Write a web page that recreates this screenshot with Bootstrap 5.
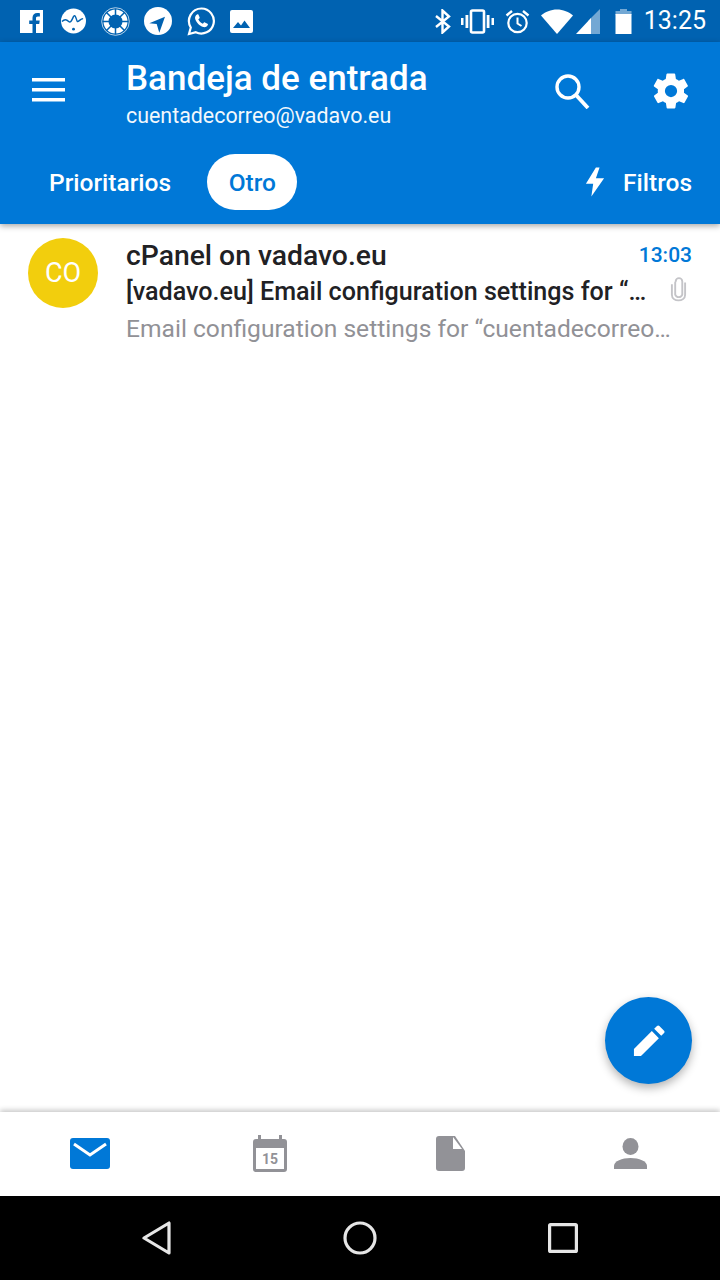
<!DOCTYPE html>
<html lang="es">
<head>
    <meta charset="UTF-8">
    <meta name="viewport" content="width=device-width, initial-scale=1.0">
    <title>Bandeja de entrada</title>
    <link href="https://cdn.jsdelivr.net/npm/bootstrap@5.3.0/dist/css/bootstrap.min.css" rel="stylesheet">
    <style>
        html, body { height: 100%; }
        body { font-family: Roboto, "Liberation Sans", sans-serif; background: #fff; overflow: hidden; }
        svg { display: block; flex-shrink: 0; }
        .screen { width: 720px; height: 1280px; position: relative; }
        .status-bar { height: 42px; background: #0062b1; color: #fff; padding: 0 14px 0 20px; }
        .status-left { gap: 15px; }
        .icon-fb { margin-right: 3px; }
        .icon-ring { margin-right: -1px; }
        .status-right { gap: 10px; }
        .icon-alarm { margin-left: 1px; margin-right: 1px; }
        .icon-signal { margin-left: -7px; }
        .icon-battery { margin-left: 5px; }
        .status-time { font-size: 25px; line-height: 42px; margin-left: 2px; }
        .app-header { height: 182px; background: #0078d7; color: #fff; box-shadow: 0 2px 6px rgba(0,0,0,.35); position: relative; z-index: 2; }
        .top-row { height: 112px; }
        .menu-slot { width: 126px; padding-left: 32px; padding-top: 36px; }
        .title-block { padding-top: 16px; }
        .mail-title { font-size: 35px; font-weight: 500; line-height: 42px; }
        .mail-account { font-size: 21.4px; line-height: 28px; margin-top: 2px; opacity: .95; }
        .head-icons { padding: 28px 28px 0 0; gap: 60px; }
        .icon-search { margin-top: 3px; }
        .tab-row { padding: 0 28px 0 27px; height: 56px; }
        .tab-item { font-size: 24.5px; font-weight: 500; padding: 0 22px; height: 56px; line-height: 58px; border-radius: 28px; color: #fff; }
        .tab-on { background: #fff; color: #0078d7; margin-left: 14px; padding: 0 21.5px; }
        .filter-item { font-size: 24.5px; font-weight: 500; gap: 18px; }
        .filter-label { margin-top: 2px; }
        .msg-row { padding: 14px 28px 0 28px; }
        .avatar-co { width: 70px; height: 70px; border-radius: 50%; background: #f2ce0d; color: #fff; font-size: 27px; margin-right: 28px; }
        .msg-body { width: 566px; padding-top: 1px; }
        .msg-sender { font-size: 28.3px; font-weight: 500; line-height: 34px; color: #212124; }
        .msg-time { font-size: 21px; font-weight: 500; color: #0078d7; line-height: 32px; }
        .msg-subject { font-size: 25.1px; font-weight: 500; line-height: 36px; color: #212124; margin-top: 1px; white-space: nowrap; }
        .msg-preview { font-size: 24.6px; line-height: 36px; color: #919196; margin-top: 1px; white-space: nowrap; }
        .clip-slot { padding: 3px 5px 0 0; }
        .spacer-fill { flex: 1 1 auto; }
        .fab-compose { position: absolute; right: 28px; top: 997px; width: 87px; height: 87px; border-radius: 50%; background: #0078d7; box-shadow: 0 4px 10px rgba(0,0,0,.3); z-index: 3; }
        .tab-bar { height: 84px; background: #fff; box-shadow: 0 -2px 5px rgba(0,0,0,.22); padding-bottom: 1px; position: relative; }
        .tab-cell { width: 180px; }
        .nav-bar { height: 84px; background: #000; position: relative; }
        .nav-cell { width: 203px; }
        .cal-num { font-size: 14px; font-weight: 700; }
    </style>
</head>
<body>
<div class="screen d-flex flex-column">

    <div class="status-bar d-flex justify-content-between align-items-center flex-shrink-0">
        <div class="status-left d-flex align-items-center">
            <!-- facebook -->
            <svg class="icon-fb" width="23" height="23" viewBox="1 1 23 23"><path fill="#fff" d="M1 1h23v23h-7v-9h3.2l.5-3.6H17V9.2c0-1.1.4-1.8 1.900-1.800h2V4.200C20.400 4.100 19.400 4 18.200 4 15.500 4 13.500 5.700 13.500 8.700v2.700h-3.300V15h3.300v9H1z"/></svg>
            <!-- pulse -->
            <svg width="25" height="26" viewBox="0 0 26 27"><circle cx="13" cy="13.500" r="13" fill="#fff"/><path fill="none" stroke="#0062b1" stroke-width="1.500" d="M1 14c3-3 5-2 7 0s3-1 5-5 3 4 4 5 3-3 6-3"/><circle cx="13" cy="22" r="1.500" fill="#0062b1"/></svg>
            <!-- ring -->
            <svg class="icon-ring" width="29" height="29" viewBox="0 0 29 29"><circle cx="14.500" cy="14.500" r="13.800" fill="none" stroke="#fff" stroke-opacity=".7" stroke-width="1"/><circle cx="14.500" cy="14.500" r="9.500" fill="none" stroke="#fff" stroke-width="5"/><g stroke="#0062b1" stroke-width="1.500"><path d="M14.500 2v6M14.500 21v6M2 14.500h6M21 14.500h6M5.500 5.500l4.500 4.500M19 19l4.500 4.500M23.500 5.500L19 10M10 19l-4.500 4.500"/></g></svg>
            <!-- telegram -->
            <svg width="28" height="28" viewBox="0 0 28 28"><circle cx="14" cy="14" r="14" fill="#fff"/><path fill="#0062b1" d="M5.300 16.300L21 9.700 15.300 25.700 12.700 17z"/></svg>
            <!-- whatsapp -->
            <svg width="28" height="29" viewBox="0 0 28 29"><path fill="none" stroke="#fff" stroke-width="2.200" d="M14.500 1.500a12.500 12.500 0 0 0-10.700 19L2 27l6.800-1.800A12.500 12.500 0 1 0 14.500 1.500z"/><path fill="#fff" d="M10 7.500c-1.500 1-2.300 2.500-1.800 4.500 1 3.500 4.500 7 8 8 2 .5 3.500-.3 4.500-1.800.4-.6.3-1.200-.2-1.500l-2.600-1.300c-.5-.2-.9-.1-1.200.3l-.8 1c-2-.8-3.700-2.500-4.600-4.500l1-.8c.4-.3.5-.7.300-1.200L11.500 7.700c-.3-.5-1-.6-1.500-.2z"/></svg>
            <!-- picture -->
            <svg width="23" height="23" viewBox="0 0 23 23"><rect width="23" height="23" rx="2" fill="#fff"/><path fill="#0062b1" d="M3 18l5-6 3 3.500 3.500-5L20 18z"/></svg>
        </div>
        <div class="status-right d-flex align-items-center">
            <!-- bluetooth -->
            <svg width="17" height="25" viewBox="0 0 16 25"><path fill="none" stroke="#fff" stroke-width="2.400" d="M1.500 7l13 10.500L8 23.500V1.500l6.500 6L1.500 18"/></svg>
            <!-- vibrate -->
            <svg width="33" height="25" viewBox="0 0 33 25"><rect x="10" y="1.500" width="13" height="22" rx="1.500" fill="none" stroke="#fff" stroke-width="2.600"/><path fill="#fff" d="M0 9h2.500v7H0zM4.500 6h2.800v13H4.500zM25.700 6h2.800v13h-2.800zM30.500 9H33v7h-2.500z"/></svg>
            <!-- alarm -->
            <svg class="icon-alarm" width="25" height="25" viewBox="0 0 25 25"><circle cx="12.500" cy="14" r="9.200" fill="none" stroke="#fff" stroke-width="2.200"/><path fill="none" stroke="#fff" stroke-width="2" d="M12.500 8.500V14.500l4 2.500"/><path fill="none" stroke="#fff" stroke-width="2.400" d="M1.500 6.500L7 2M23.500 6.500L18 2"/></svg>
            <!-- wifi -->
            <svg width="32" height="25" viewBox="0 0 32 25"><path fill="#fff" d="M16 25L0 6.500C4 3 10 .5 16 .5S28 3 32 6.500z"/></svg>
            <!-- signal -->
            <svg class="icon-signal" width="24" height="25" viewBox="0 0 24 25"><path fill="#fff" fill-opacity=".45" d="M24 0v25H12V12z"/><path fill="#fff" d="M15 9v16H0z"/></svg>
            <!-- battery -->
            <svg class="icon-battery" width="17" height="25" viewBox="0 0 16 25"><path fill="#fff" fill-opacity=".45" d="M4.500 0h7v2H16v4H0V2h4.500z"/><rect y="5" width="16" height="20" fill="#fff"/></svg>
            <span class="status-time">13:25</span>
        </div>
    </div>

    <div class="app-header flex-shrink-0">
        <div class="top-row d-flex">
            <div class="menu-slot flex-shrink-0">
                <svg width="33" height="24" viewBox="0 0 33 24"><path fill="#fff" d="M0 0h33v3.500H0zM0 10h33v3.500H0zM0 20h33v3.500H0z"/></svg>
            </div>
            <div class="title-block flex-grow-1">
                <div class="mail-title">Bandeja de entrada</div>
                <div class="mail-account">cuentadecorreo@vadavo.eu</div>
            </div>
            <div class="head-icons d-flex align-items-start">
                <svg class="icon-search" width="36" height="36" viewBox="0 0 36 36"><circle cx="14" cy="14" r="11" fill="none" stroke="#fff" stroke-width="3.400"/><path stroke="#fff" stroke-width="3.800" d="M22 22l12 13"/></svg>
                <svg width="42" height="42" viewBox="0 0 24 24"><path fill="#fff" d="M19.400 13a7.500 7.500 0 0 0 0-2l2.100-1.600c.2-.2.200-.4.100-.6l-2-3.500c-.1-.2-.4-.3-.6-.2l-2.500 1a7.300 7.300 0 0 0-1.700-1L14.400 2.400c0-.2-.2-.4-.5-.4h-4c-.2 0-.4.200-.5.400L9 5.100a7.700 7.700 0 0 0-1.700 1l-2.500-1c-.2-.1-.5 0-.6.200l-2 3.500c-.1.200-.1.500.1.600L4.500 11a7.900 7.900 0 0 0 0 2l-2.100 1.600c-.2.200-.2.400-.1.600l2 3.500c.1.200.4.300.6.200l2.500-1c.5.400 1.100.8 1.700 1l.4 2.700c0 .2.200.4.500.4h4c.2 0 .4-.2.500-.4l.4-2.700a7.700 7.700 0 0 0 1.700-1l2.500 1c.2.100.5 0 .6-.2l2-3.500c.1-.2.100-.5-.1-.6zM12 15.500a3.500 3.500 0 1 1 0-7 3.500 3.500 0 0 1 0 7z"/></svg>
            </div>
        </div>
        <div class="tab-row d-flex align-items-center justify-content-between">
            <div class="d-flex">
                <div class="tab-item">Prioritarios</div>
                <div class="tab-item tab-on">Otro</div>
            </div>
            <div class="filter-item d-flex align-items-center">
                <svg width="20" height="30" viewBox="0 0 22 32"><path fill="#fff" d="M12 0L1 18h8l-2 14 14-20h-9l4-12z"/></svg>
                <span class="filter-label">Filtros</span>
            </div>
        </div>
    </div>

    <div class="msg-row d-flex flex-shrink-0">
        <div class="avatar-co d-flex align-items-center justify-content-center flex-shrink-0">CO</div>
        <div class="msg-body">
            <div class="d-flex justify-content-between">
                <div class="msg-sender">cPanel on vadavo.eu</div>
                <div class="msg-time">13:03</div>
            </div>
            <div class="d-flex justify-content-between">
                <div class="msg-subject">[vadavo.eu] Email configuration settings for “…</div>
                <div class="clip-slot">
                    <svg width="17" height="26" viewBox="0 0 18 26"><path fill="none" stroke="#c4c4c8" stroke-width="2" stroke-linecap="round" d="M5.500 6v13a4 4 0 0 0 7.500 0V5a3.500 3.500 0 0 0-7 0"/><path fill="none" stroke="#c4c4c8" stroke-width="2" d="M2 8v11c0 8 14 8 14 0V6"/></svg>
                </div>
            </div>
            <div class="msg-preview">Email configuration settings for “cuentadecorreo…</div>
        </div>
    </div>

    <div class="spacer-fill"></div>

    <div class="fab-compose d-flex align-items-center justify-content-center">
        <svg width="32" height="32" viewBox="0 0 34 34"><path fill="#fff" d="M1 33v-7.500L20 6.500 27.500 14 8.500 33zM22.500 4l3-3c.8-.8 1.800-.8 2.500 0l5 5c.7.700.7 1.700 0 2.500l-3 3z"/></svg>
    </div>

    <div class="tab-bar d-flex align-items-center flex-shrink-0">
        <div class="tab-cell d-flex justify-content-center">
            <svg width="40" height="31" viewBox="0 0 40 31"><rect width="40" height="31" rx="3" fill="#0078d7"/><path fill="none" stroke="#fff" stroke-width="3" d="M4 6l16 11L36 6"/></svg>
        </div>
        <div class="tab-cell d-flex justify-content-center">
            <svg width="34" height="37" viewBox="0 0 34 37"><path fill="#929297" d="M5 0h3v4h18V0h3v4h2a3 3 0 0 1 3 3v27a3 3 0 0 1-3 3H3a3 3 0 0 1-3-3V7a3 3 0 0 1 3-3h2z"/><rect x="3" y="13" width="28" height="21" fill="#fff"/><text x="17" y="29" text-anchor="middle" fill="#929297" class="cal-num">15</text></svg>
        </div>
        <div class="tab-cell d-flex justify-content-center">
            <svg width="29" height="35" viewBox="0 0 29 35"><path fill="#929297" d="M3 0h16l10 15v17a3 3 0 0 1-3 3H3a3 3 0 0 1-3-3V3a3 3 0 0 1 3-3z"/><path fill="#fff" d="M17 1v12h9z"/></svg>
        </div>
        <div class="tab-cell d-flex justify-content-center">
            <svg width="33" height="31" viewBox="0 0 33 31"><ellipse cx="16.500" cy="8.500" rx="8" ry="8.500" fill="#929297"/><path fill="#929297" d="M0 31v-3c0-5 8-8 16.500-8S33 23 33 28v3z"/></svg>
        </div>
    </div>

    <div class="nav-bar d-flex justify-content-center align-items-center flex-shrink-0">
        <div class="nav-cell d-flex justify-content-center">
            <svg width="30" height="34" viewBox="0 0 30 34"><path fill="none" stroke="#e6e6e6" stroke-width="3.200" stroke-linejoin="round" d="M27 2v30L2 17z"/></svg>
        </div>
        <div class="nav-cell d-flex justify-content-center">
            <svg width="34" height="34" viewBox="0 0 34 34"><circle cx="17" cy="17" r="15" fill="none" stroke="#e6e6e6" stroke-width="3.200"/></svg>
        </div>
        <div class="nav-cell d-flex justify-content-center">
            <svg width="30" height="30" viewBox="0 0 30 30"><rect x="1.600" y="1.600" width="26.800" height="26.800" rx="1" fill="none" stroke="#e6e6e6" stroke-width="3.200"/></svg>
        </div>
    </div>
</div>
<script src="https://cdn.jsdelivr.net/npm/bootstrap@5.3.0/dist/js/bootstrap.bundle.min.js"></script>
</body>
</html>
